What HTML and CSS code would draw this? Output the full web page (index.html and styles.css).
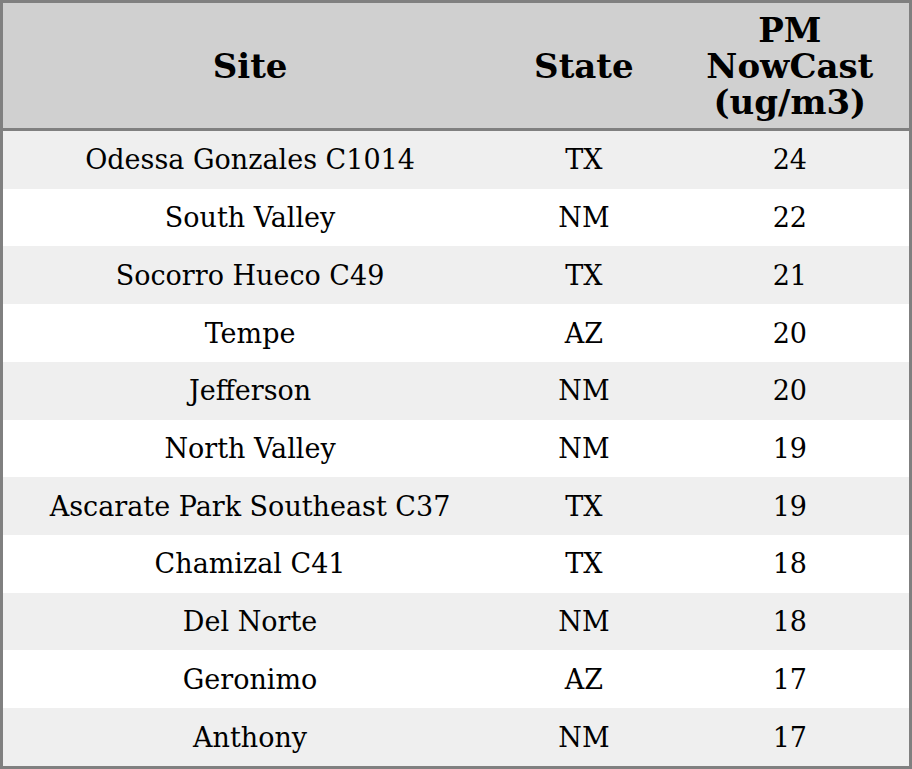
FILE: index.html
```html
<!DOCTYPE html>
<html>
<head>
<meta charset="utf-8">
<link rel="stylesheet" href="styles.css">
</head>
<body>
<table class="aq">
  <colgroup>
    <col class="c-site">
    <col class="c-state">
    <col class="c-pm">
  </colgroup>
  <thead>
    <tr>
      <th>Site</th>
      <th>State</th>
      <th>PM<br>NowCast<br>(ug/m3)</th>
    </tr>
  </thead>
  <tbody>
    <tr><td>Odessa Gonzales C1014</td><td>TX</td><td>24</td></tr>
    <tr><td>South Valley</td><td>NM</td><td>22</td></tr>
    <tr><td>Socorro Hueco C49</td><td>TX</td><td>21</td></tr>
    <tr><td>Tempe</td><td>AZ</td><td>20</td></tr>
    <tr><td>Jefferson</td><td>NM</td><td>20</td></tr>
    <tr><td>North Valley</td><td>NM</td><td>19</td></tr>
    <tr><td>Ascarate Park Southeast C37</td><td>TX</td><td>19</td></tr>
    <tr><td>Chamizal C41</td><td>TX</td><td>18</td></tr>
    <tr><td>Del Norte</td><td>NM</td><td>18</td></tr>
    <tr><td>Geronimo</td><td>AZ</td><td>17</td></tr>
    <tr><td>Anthony</td><td>NM</td><td>17</td></tr>
  </tbody>
</table>
</body>
</html>
```
FILE: styles.css
```css
html, body {
  margin: 0;
  padding: 0;
  background: #ffffff;
}
.aq {
  width: 912px;
  height: 769px;
  border-collapse: collapse;
  border: 3px solid #808080;
  font-family: "DejaVu Serif", serif;
  color: #000;
  table-layout: fixed;
}
.c-site { width: 494px; }
.c-state { width: 173px; }
.c-pm { width: 239px; }
.aq thead th {
  background: #d0d0d0;
  border-bottom: 3px solid #808080;
  font-size: 34px;
  font-weight: bold;
  line-height: 36px;
  height: 125px;
  padding: 0;
  text-align: center;
}
.aq tbody td {
  font-size: 27px;
  text-align: center;
  padding: 0;
  height: 57.7px;
}
.aq tbody tr:nth-child(odd) td { background: #efefef; }
.aq tbody tr:nth-child(even) td { background: #ffffff; }
```
